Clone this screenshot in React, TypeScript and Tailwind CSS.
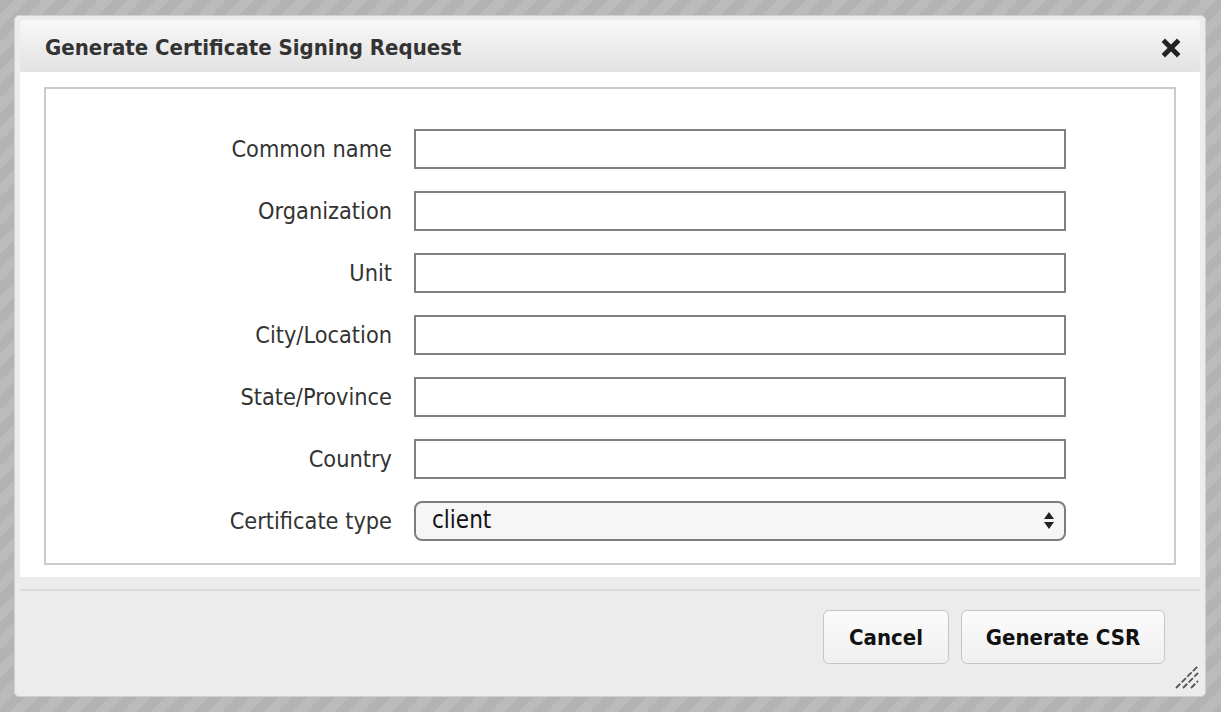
import React from "react";

const FONT = "font-['DejaVu_Sans_Condensed','DejaVu_Sans',sans-serif]";

const fields = [
  "Common name",
  "Organization",
  "Unit",
  "City/Location",
  "State/Province",
  "Country",
];

function Row({ label, children }: { label: string; children: React.ReactNode }) {
  return (
    <div className="flex h-[40px] items-center">
      <div className="box-content w-[346px] pr-[22px] text-right text-[23.3px] leading-none text-[#333]">
        {label}
      </div>
      {children}
    </div>
  );
}

export default function App() {
  return (
    <div
      className={`${FONT} w-[1221px] h-[712px] overflow-hidden bg-[repeating-linear-gradient(135deg,#b3b3b3_0px,#b3b3b3_10px,#bbbbbb_10px,#bbbbbb_20px)] pt-[15px] pl-[14px]`}
    >
      <div className="relative flex h-[682px] w-[1192px] flex-col rounded-[5px] border border-[#d0d0d0] bg-[#ececec] px-[5px] pt-[4px] pb-[5px]">
        {/* Title bar */}
        <div className="flex h-[52px] shrink-0 items-center justify-between rounded-[4px] bg-gradient-to-b from-[#f8f8f8] to-[#e2e2e2] pl-[25px] pr-[19px]">
          <span className="mt-[3px] text-[22px] font-bold text-[#333]">Generate Certificate Signing Request</span>
          <svg width="20" height="20" viewBox="0 0 20 20" className="mt-[3px]">
            <path d="M4 4 L16 16 M16 4 L4 16" stroke="#222" strokeWidth="4.8" strokeLinecap="square" />
          </svg>
        </div>
        {/* Content */}
        <div className="h-[505px] shrink-0 bg-white px-[24px] pt-[15px] pb-[12px]">
          <div className="flex h-[478px] flex-col gap-[22px] border-2 border-[#cbcbcb] pt-[40px]">
            {fields.map((f) => (
              <Row key={f} label={f}>
                <div className="h-[40px] w-[652px] border-2 border-[#808080] bg-white" />
              </Row>
            ))}
            <Row label="Certificate type">
              <div className="flex h-[40px] w-[652px] items-center justify-between rounded-[8px] border-2 border-[#7d7d7d] bg-[#f6f6f6] pl-[16px] pr-[9px]">
                <span className="mb-[2px] text-[24px] leading-none text-[#111]">client</span>
                <svg width="12" height="20" viewBox="0 0 12 20">
                  <path d="M1 8 L6 1 L11 8 Z" fill="#222" />
                  <path d="M1 11 L6 18 L11 11 Z" fill="#222" />
                </svg>
              </div>
            </Row>
          </div>
        </div>
        {/* Footer */}
        <div className="mt-[12px] flex flex-1 items-start justify-end gap-[12px] border-t-2 border-[#dadada] pt-[19px] pr-[35px]">
          <button className="flex h-[54px] w-[126px] items-center justify-center rounded-[6px] border border-[#c6c6c6] bg-gradient-to-b from-[#fbfbfb] to-[#f0f0f0] text-[22px] font-bold text-[#111]">
            Cancel
          </button>
          <button className="flex h-[54px] w-[204px] items-center justify-center rounded-[6px] border border-[#c6c6c6] bg-gradient-to-b from-[#fbfbfb] to-[#f0f0f0] text-[22px] font-bold text-[#111]">
            Generate CSR
          </button>
        </div>
        {/* Resize grip */}
        <svg className="absolute right-[6px] bottom-[7px]" width="24" height="24" viewBox="0 0 24 24">
          <path d="M1 23 L23 1" stroke="#555" strokeWidth="1.8" strokeDasharray="6 2" />
          <path d="M8 23 L23 8" stroke="#555" strokeWidth="1.8" strokeDasharray="6 2" />
          <path d="M16 23 L23 16" stroke="#555" strokeWidth="1.8" strokeDasharray="6 2" />
        </svg>
      </div>
    </div>
  );
}
